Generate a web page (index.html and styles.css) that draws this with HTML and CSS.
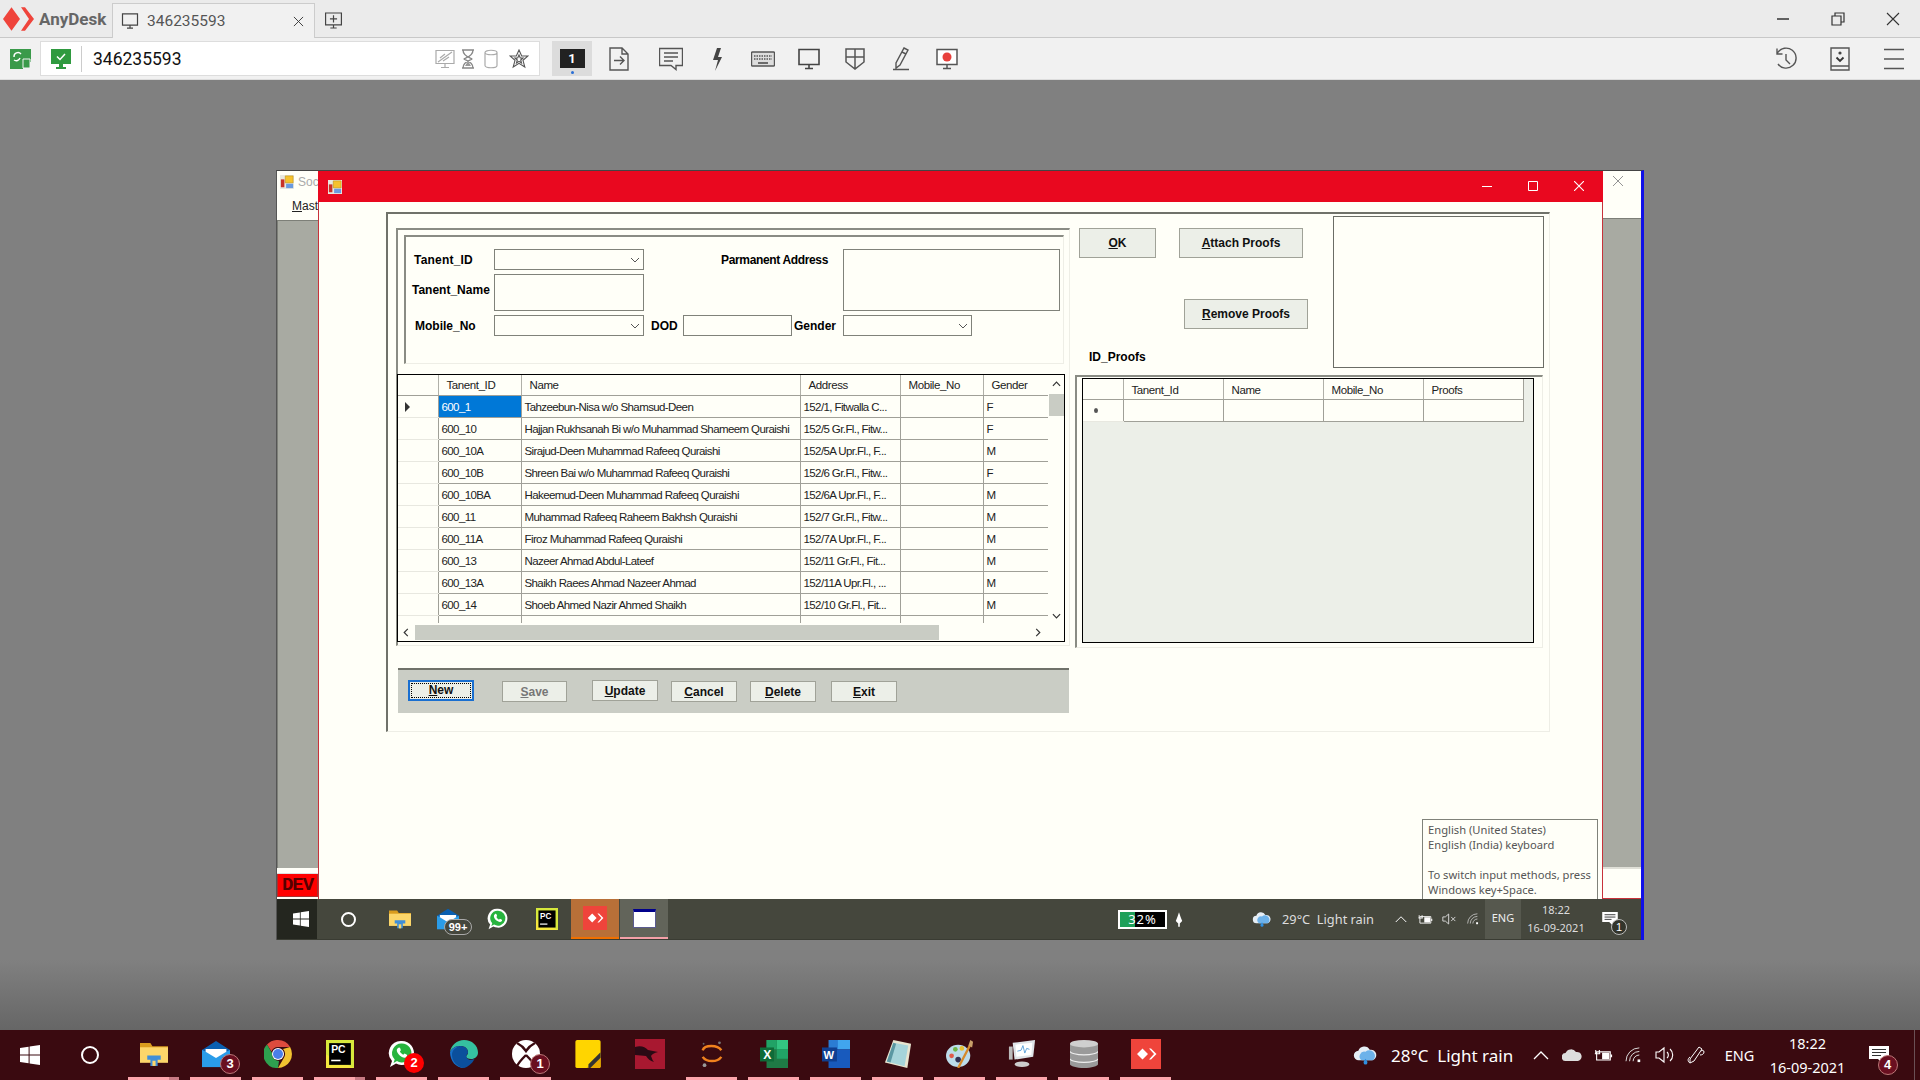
FILE: index.html
```html
<!DOCTYPE html>
<html lang="en">
<head>
<meta charset="UTF-8">
<title>AnyDesk - 346235593</title>
<link rel="stylesheet" href="styles.css">
</head>
<body>

<svg class="defs" xmlns="http://www.w3.org/2000/svg">
  <symbol id="ad-logo" viewBox="0 0 32 22" preserveAspectRatio="none"><path d="M0 11 8.500 1 17 11 8.500 21Z M18 1h4l9 10-9 10h-4l8-10Z"/></symbol>
  <symbol id="monitor" viewBox="0 0 24 24"><path d="M2 2.500h20v15H2Z M12 18v3 M8 21.500h8" fill="none" stroke="#444" stroke-width="1.600"/></symbol>
  <symbol id="win" viewBox="0 0 20 20"><path fill="#fff" d="M0 3 8.600 1.800V9.400H0Z M9.600 1.600 20 0V9.400H9.600Z M0 10.600H8.600V18.200L0 17Z M9.600 10.600H20V20L9.600 18.400Z"/></symbol>
  <symbol id="folder" viewBox="0 0 27 23"><path fill="#d99c1e" d="M0 1h10l2 3h15v6H0Z"/><path fill="#fcd66a" d="M0 5h27v15H0Z"/><path fill="#3f8ed8" d="M7 13h13v4h-3v6h-7v-6H7Z"/><path fill="#fcd66a" d="M12 18h3v5h-3Z"/></symbol>
  <symbol id="mail" viewBox="0 0 31 29"><path fill="#2a9ce9" d="M0 10h31v19H0Z"/><path fill="#0a5fb0" d="M15.500 0 31 10 15.500 17 0 10Z"/><path fill="#fff" d="M4 9h23v3l-11.500 7L4 12Z"/></symbol>
  <symbol id="whatsapp" viewBox="0 0 26 28"><path fill="#fff" d="M13 1a12 12 0 1 1-6 22.400L1 27l2-6A12 12 0 0 1 13 1Z"/><path fill="#27b43e" d="M13 3.500a9.500 9.500 0 1 1-5 17.600L4.500 23l1.200-3.500A9.500 9.500 0 0 1 13 3.500Z"/><path fill="#fff" d="M9 8c1-1 2-.5 2.300.5l.6 1.800-1 1.300c.7 1.400 1.800 2.500 3.300 3.200l1.300-1.200 2 .9c.8.500.9 1.200.4 2-1.200 1.500-3 1.500-5 .4-2.700-1.400-4.400-3.500-5-5.600C7.600 9.700 8 8.800 9 8Z"/></symbol>
  <symbol id="pycharm" viewBox="0 0 27 27"><path fill="#d7e83c" d="M0 0h27v27H0Z"/><path fill="#f5e73f" d="M0 14 27 27H0Z"/><path fill="#000" d="M3 3h21v21H3Z"/><text x="5" y="13" font-family="Liberation Sans" font-weight="700" font-size="10" fill="#fff">PC</text><path fill="#fff" d="M5 19h9v1.500H5Z"/></symbol>
  <symbol id="ad-tile" viewBox="0 0 30 30"><path fill="#ef443b" d="M0 0h30v30H0Z"/><path fill="#fff" d="M6 15 11.500 9.500 17 15 11.500 20.500Z M18 9.500h2l5.500 5.500-5.500 5.500h-2l5-5.500Z"/></symbol>
  <symbol id="cloud" viewBox="0 0 26 20"><path fill="#e6eef6" d="M6 15a5 5 0 0 1-.5-10A6.500 6.500 0 0 1 17.500 4 5.500 5.500 0 0 1 20 15Z"/><path fill="#6db2ea" d="M9 15a5 5 0 0 1 4-9 5 5 0 0 1 8 9Z"/><path fill="#2f8fe0" d="M13 13.500c1.500 2 2 3 2 4a2 2 0 0 1-4 0c0-1 .5-2 2-4Z"/></symbol>
  <symbol id="chev-up" viewBox="0 0 16 10"><path d="M1 9 8 2l7 7" fill="none" stroke="#fff" stroke-width="1.300"/></symbol>
  <symbol id="batt" viewBox="0 0 22 14"><path d="M4 3h15v9H4Z M3 1v4 M7 1v4 M2 5h6" fill="none" stroke="#fff" stroke-width="1.200"/><path fill="#fff" d="M10 4h8v7h-8Z M19.500 6H21v3h-1.500Z"/></symbol>
  <symbol id="wifi" viewBox="0 0 20 18"><path d="M1 16A15 15 0 0 1 16 1 M5 16A11 11 0 0 1 16 5 M9 16a7 7 0 0 1 7-7" fill="none" stroke="#ddd" stroke-width="1.100"/><path fill="#fff" d="M14 14h3v3h-3Z"/></symbol>
  <symbol id="app" viewBox="0 0 16 16"><path fill="#e8e8e0" d="M0 0h16v16H0Z"/><path fill="#f5c22e" stroke="#b98a10" stroke-width=".6" d="M6 1h9v8H6Z"/><path fill="#c83228" d="M1 5h4v9H1Z"/><path fill="#6a9ae0" d="M7 10h8v5H7Z"/></symbol>
  <symbol id="note" viewBox="0 0 20 18"><path fill="#fff" d="M0 0h20v13h-6v5l-5-5H0Z"/><path d="M3 3.500h14M3 6.500h14M3 9.500h9" stroke="#333" stroke-width="1.200"/></symbol>
  <symbol id="combo-arrow" viewBox="0 0 10 6"><path d="M1 1l4 4 4-4" fill="none" stroke="#555" stroke-width="1"/></symbol>
</svg>

<header class="tabbar">
  <div class="brand">
    <svg class="brand-logo"><use href="#ad-logo"/></svg>
    <span class="brand-name">AnyDesk</span>
  </div>
  <div class="tab">
    <svg class="tab-icon"><use href="#monitor"/></svg>
    <span class="tab-title">346235593</span>
    <svg class="tab-close" viewBox="0 0 12 12"><path d="M1 1l10 10M11 1 1 11" stroke="#333" stroke-width="1"/></svg>
  </div>
  <svg class="new-tab" viewBox="0 0 24 24"><path d="M2 2.500h20v15H2Z M12 18v3 M8 21.500h8 M12 5.500v9 M7.500 10h9" fill="none" stroke="#444" stroke-width="1.500"/></svg>
  <div class="win-ctrl">
    <svg viewBox="0 0 14 14"><path d="M1 7h12" stroke="#333" stroke-width="1.500"/></svg>
    <svg viewBox="0 0 14 14"><path d="M1 4h9v9H1Z M4 4V1h9v9h-3" fill="none" stroke="#333" stroke-width="1.200"/></svg>
    <svg viewBox="0 0 14 14"><path d="M1 1l12 12M13 1 1 13" stroke="#333" stroke-width="1.100"/></svg>
  </div>
</header>

<div class="toolbar">
  <svg class="conn-icon" viewBox="0 0 21 20"><path fill="#3a9a4a" d="M0 0h21v13h-8v7H0Z"/><path d="M4 8a4 4 0 0 1 7-3M10 9a4 4 0 0 1-6 2" fill="none" stroke="#fff" stroke-width="1.400"/><path fill="#3a9a4a" stroke="#f1f1f1" d="M13 10h7v9h-7Z"/></svg>
  <div class="addr">
    <svg class="addr-check" viewBox="0 0 20 20"><path fill="#2f9a3f" d="M0 0h20v15H0Z M8 15h4v3h3v2H5v-2h3Z"/><path d="M6 7.500 9 10.500 14 5" fill="none" stroke="#fff" stroke-width="1.500"/></svg>
    <span class="addr-text">346235593</span>
    <div class="addr-icons">
      <svg viewBox="0 0 20 20"><path d="M1 1.500h18v13H1Z M10 15v3 M6 18.500h8 M3 13 17 3 M5 9l5-4 M8 12l6-4" fill="none" stroke="#aaa" stroke-width="1.200"/></svg>
      <svg viewBox="0 0 20 20"><path d="M4 1h12M4 19h12M5 1c0 7 9 8 9 9s-9 2-9 9M15 1c0 7-9 8-9 9s9 2 9 9" fill="none" stroke="#888" stroke-width="1.300"/><path fill="#999" d="M7 17l3-5 3 5Z"/></svg>
      <svg viewBox="0 0 20 20"><path d="M4 3.500c0-3 12-3 12 0v13c0 3-12 3-12 0Z M4 3.500c0 3 12 3 12 0" fill="none" stroke="#aaa" stroke-width="1.200"/></svg>
      <svg viewBox="0 0 20 20"><path d="M10 1l2.700 6H19l-5 4.300 1.800 6.700L10 14.300 4.200 18 6 11.300 1 7h6.300Z M10 6l1.300 3H14l-2.300 2 .8 3L10 12.300 7.500 14l.8-3L6 9h2.700Z" fill="none" stroke="#555" stroke-width="1.100"/></svg>
    </div>
  </div>
  <div class="display-btn"><span class="display-num">1</span><i class="display-dot"></i></div>
  <div class="tools">
    <svg class="tool-first" viewBox="0 0 24 24"><path d="M3 1h12l6 6v16H3Z M15 1v6h6 M7 13.500h10 M13 9.500l4 4-4 4" fill="none" stroke="#555" stroke-width="1.400"/></svg>
    <svg viewBox="0 0 24 24"><path d="M.5 1.500h23v17H17v4l-5-4H.5Z M5 6h14M5 10h14M5 14h9" fill="none" stroke="#555" stroke-width="1.400"/></svg>
    <svg viewBox="0 0 24 24"><path fill="#444" d="M12 1h4l-3 9h4L10 24l3-11H8Z"/></svg>
    <svg viewBox="0 0 24 24"><rect x=".5" y="5" width="23" height="14" rx="1" fill="#ddd" stroke="#555" stroke-width="1.400"/><path d="M3 9h18M3 12h18" stroke="#555" stroke-width="1.500" stroke-dasharray="1.500 1"/><path d="M7 16h10" stroke="#444" stroke-width="1.500"/></svg>
    <svg><use href="#monitor"/></svg>
    <svg viewBox="0 0 24 24"><path d="M3 2h18v13l-9 7-9-7Z M12 2v20 M3 10h18" fill="none" stroke="#555" stroke-width="1.500"/></svg>
    <svg viewBox="0 0 24 24"><path d="M15 1l4 2-8 15-4 3 0-5Z M13 5l4 2 M4 22.500h16" fill="none" stroke="#555" stroke-width="1.400"/></svg>
    <svg viewBox="0 0 24 24"><path d="M2 2.500h20v15H2Z M12 18v3 M8 21.500h8" fill="#fff" stroke="#555" stroke-width="1.500"/><circle cx="12" cy="10" r="4.500" fill="#e8403c"/></svg>
  </div>
  <div class="tools-right">
    <svg viewBox="0 0 24 24"><path d="M3.500 6A10 10 0 1 1 4 17 M3 1.500V7h5.500 M12 7v6l4 4" fill="none" stroke="#555" stroke-width="1.400"/></svg>
    <svg viewBox="0 0 24 24"><path d="M3 1h18v22H3Z M3 19h18" fill="none" stroke="#555" stroke-width="1.400"/><circle cx="12" cy="6" r="1.600" fill="#444"/><path d="M8.500 10.500 12 14l3.500-3.500" fill="none" stroke="#333" stroke-width="1.800"/></svg>
    <svg viewBox="0 0 24 24"><path d="M2 2.500h20M2 12h20M2 21.500h20" stroke="#555" stroke-width="1.500"/></svg>
  </div>
</div>

<main class="desktop">
  <div class="remote">
    <div class="screen">

      <div class="mdi-left">
        <div class="mdi-title"><svg class="app-icon"><use href="#app"/></svg><span class="mdi-name">Soc</span></div>
        <div class="mdi-menu"><u>M</u>ast</div>
        <div class="mdi-work"></div>
        <div class="mdi-stripe"></div>
        <div class="dev-tag">DEV</div>
      </div>

      <section class="form">
        <div class="form-title">
          <svg class="app-icon"><use href="#app"/></svg>
          <div class="form-ctrl">
            <svg viewBox="0 0 10 10"><path d="M0 5.500h10" stroke="#fff" stroke-width="1"/></svg>
            <svg viewBox="0 0 10 10"><path d="M.5.500h9v9h-9Z" fill="none" stroke="#fff" stroke-width="1"/></svg>
            <svg viewBox="0 0 10 10"><path d="M0 0l10 10M10 0 0 10" stroke="#fff" stroke-width="1.100"/></svg>
          </div>
        </div>

        <div class="group-outer">
          <div class="left-col">
            <div class="group-mid">
              <div class="fields">
                <label class="lbl lbl-id">Tanent_ID</label>
                <div class="combo cell-b"><svg><use href="#combo-arrow"/></svg></div>
                <label class="lbl lbl-addr">Parmanent Address</label>
                <div class="box box-addr"></div>
                <label class="lbl lbl-name">Tanent_Name</label>
                <div class="box box-name"></div>
                <label class="lbl lbl-mob">Mobile_No</label>
                <div class="combo cell-b cell-r3"><svg><use href="#combo-arrow"/></svg></div>
                <label class="lbl lbl-dod">DOD</label>
                <div class="box box-dod"></div>
                <label class="lbl lbl-gen">Gender</label>
                <div class="combo combo-gen"><svg><use href="#combo-arrow"/></svg></div>
              </div>

              <div class="grid">
                <div class="grid-view">
                  <div class="grid-scroller">
                    <table class="dg">
                      <colgroup><col class="c-rh"><col class="c-id"><col class="c-nm"><col class="c-ad"><col class="c-mb"><col class="c-gn"></colgroup>
                      <tr><th></th><th>Tanent_ID</th><th>Name</th><th>Address</th><th>Mobile_No</th><th>Gender</th></tr>
                      <tr><td class="rh"><i class="row-arrow"></i></td><td class="sel">600_1</td><td>Tahzeebun-Nisa w/o Shamsud-Deen</td><td>152/1, Fitwalla C...</td><td></td><td>F</td></tr>
                      <tr><td class="rh"></td><td>600_10</td><td>Hajjan Rukhsanah Bi w/o Muhammad Shameem Quraishi</td><td>152/5 Gr.Fl., Fitw...</td><td></td><td>F</td></tr>
                      <tr><td class="rh"></td><td>600_10A</td><td>Sirajud-Deen Muhammad Rafeeq Quraishi</td><td>152/5A Upr.Fl., F...</td><td></td><td>M</td></tr>
                      <tr><td class="rh"></td><td>600_10B</td><td>Shreen Bai w/o Muhammad Rafeeq Quraishi</td><td>152/6 Gr.Fl., Fitw...</td><td></td><td>F</td></tr>
                      <tr><td class="rh"></td><td>600_10BA</td><td>Hakeemud-Deen Muhammad Rafeeq Quraishi</td><td>152/6A Upr.Fl., F...</td><td></td><td>M</td></tr>
                      <tr><td class="rh"></td><td>600_11</td><td>Muhammad Rafeeq Raheem Bakhsh Quraishi</td><td>152/7 Gr.Fl., Fitw...</td><td></td><td>M</td></tr>
                      <tr><td class="rh"></td><td>600_11A</td><td>Firoz Muhammad Rafeeq Quraishi</td><td>152/7A Upr.Fl., F...</td><td></td><td>M</td></tr>
                      <tr><td class="rh"></td><td>600_13</td><td>Nazeer Ahmad Abdul-Lateef</td><td>152/11 Gr.Fl., Fit...</td><td></td><td>M</td></tr>
                      <tr><td class="rh"></td><td>600_13A</td><td>Shaikh Raees Ahmad Nazeer Ahmad</td><td>152/11A Upr.Fl., ...</td><td></td><td>M</td></tr>
                      <tr><td class="rh"></td><td>600_14</td><td>Shoeb Ahmed Nazir Ahmed Shaikh</td><td>152/10 Gr.Fl., Fit...</td><td></td><td>M</td></tr>
                      <tr><td class="rh"></td><td>600_14A</td><td>Shaikh Raees Ahmad Nazeer Ahmad</td><td>152/10A Upr.Fl., ...</td><td></td><td>M</td></tr>
                    </table>
                  </div>
                  <div class="vscroll">
                    <svg class="sb-arrow" viewBox="0 0 10 6"><path d="M1 5l4-4 4 4" fill="none" stroke="#333" stroke-width="1.300"/></svg>
                    <div class="vthumb"></div>
                    <svg class="sb-arrow sb-down" viewBox="0 0 10 6"><path d="M1 1l4 4 4-4" fill="none" stroke="#333" stroke-width="1.300"/></svg>
                  </div>
                </div>
                <div class="hscroll">
                  <svg class="sb-arrow-h" viewBox="0 0 6 10"><path d="M5 1 1 5l4 4" fill="none" stroke="#333" stroke-width="1.300"/></svg>
                  <div class="hthumb"></div>
                  <svg class="sb-arrow-h sb-right" viewBox="0 0 6 10"><path d="M1 1l4 4-4 4" fill="none" stroke="#333" stroke-width="1.300"/></svg>
                </div>
              </div>
            </div>

            <div class="btn-panel">
              <button class="btn btn-new"><span class="focus-ring"><u>N</u>ew</span></button>
              <button class="btn btn-save"><u>S</u>ave</button>
              <button class="btn btn-update"><u>U</u>pdate</button>
              <button class="btn btn-cancel"><u>C</u>ancel</button>
              <button class="btn btn-delete"><u>D</u>elete</button>
              <button class="btn btn-exit"><u>E</u>xit</button>
            </div>
          </div>

          <div class="right-col">
            <div class="proof-top">
              <div class="proof-actions">
                <div class="action-row">
                  <button class="btn btn-ok"><u>O</u>K</button>
                  <button class="btn btn-attach"><u>A</u>ttach Proofs</button>
                </div>
                <button class="btn btn-remove"><u>R</u>emove Proofs</button>
                <label class="lbl lbl-proofs">ID_Proofs</label>
              </div>
              <div class="picture"></div>
            </div>
            <div class="group-proofs">
              <div class="grid-proofs">
                <table class="dg dg-proofs">
                  <colgroup><col class="p-rh"><col class="p-c"><col class="p-c"><col class="p-c"><col class="p-c"></colgroup>
                  <tr><th></th><th>Tanent_Id</th><th>Name</th><th>Mobile_No</th><th>Proofs</th></tr>
                  <tr><td class="rh"><i class="row-dot"></i></td><td></td><td></td><td></td><td></td></tr>
                </table>
              </div>
            </div>
          </div>
        </div>
      </section>

      <div class="mdi-right">
        <div class="mdi-right-title"><svg class="mdi-close" viewBox="0 0 10 10"><path d="M0 0l10 10M10 0 0 10" stroke="#888" stroke-width=".9"/></svg></div>
        <div class="mdi-work"></div>
        <div class="mdi-right-foot"></div>
      </div>

      <div class="ime-tip">English (United States)<br>English (India) keyboard<br><br>To switch input methods, press<br>Windows key+Space.</div>
    </div>

    <div class="remote-bar">
      <div class="r-start"><svg class="r-win"><use href="#win"/></svg></div>
      <div class="r-cortana"><i class="ring ring-sm"></i></div>
      <div class="r-slot"><svg class="r-ico"><use href="#folder"/></svg></div>
      <div class="r-slot r-mail"><svg class="r-ico"><use href="#mail"/></svg><span class="r-badge">99+</span></div>
      <div class="r-slot"><svg class="r-ico"><use href="#whatsapp"/></svg></div>
      <div class="r-slot"><svg class="r-ico"><use href="#pycharm"/></svg></div>
      <div class="r-tile r-tile-ad"><svg class="r-ad"><use href="#ad-tile"/></svg></div>
      <div class="r-tile r-tile-win"><div class="mini-win"></div></div>

      <div class="r-tray">
        <div class="r-batt"><span class="r-batt-text">32%</span></div>
        <div class="r-plug"><svg viewBox="0 0 10 18"><path fill="#fff" d="M5 0 7 6l2 5-3 3v4H4v-4L1 11l2-5Z"/></svg></div>
        <svg class="r-cloud"><use href="#cloud"/></svg>
        <span class="r-weather">29°C&nbsp; Light rain</span>
        <div class="r-cell"><svg class="t-up"><use href="#chev-up"/></svg></div>
        <div class="r-cell"><svg class="t-batt"><use href="#batt"/></svg></div>
        <div class="r-cell"><svg class="t-spk" viewBox="0 0 18 14"><path d="M1 4.500h3L8 1v12L4 9.500H1Z M11 4.500l5 5M16 4.500l-5 5" fill="none" stroke="#ddd" stroke-width="1.100"/></svg></div>
        <div class="r-cell"><svg class="t-wifi"><use href="#wifi"/></svg></div>
        <div class="r-eng">ENG</div>
        <div class="r-clock">18:22<br>16-09-2021</div>
        <div class="r-notif"><svg class="t-note"><use href="#note"/></svg><span class="r-notif-badge">1</span></div>
      </div>
    </div>
  </div>
</main>

<footer class="taskbar">
  <div class="t-start"><svg class="t-win"><use href="#win"/></svg></div>
  <div class="t-cortana"><i class="ring"></i></div>

  <div class="t-slot open split"><svg class="t-ico"><use href="#folder"/></svg></div>
  <div class="t-slot open"><svg class="t-ico"><use href="#mail"/></svg><span class="t-badge">3</span></div>
  <div class="t-slot open">
    <svg class="t-ico" viewBox="0 0 28 28"><path fill="#dd4b3e" d="M14 0a14 14 0 0 1 12.100 7H14a7 7 0 0 0-6.500 4.500L3 4.500A14 14 0 0 1 14 0Z"/><path fill="#f2c230" d="M26.100 7A14 14 0 0 1 14 28l5.500-9.500A7 7 0 0 0 19 9Z"/><path fill="#2ea04f" d="M3 4.500l5 8.500a7 7 0 0 0 7 8l-1 7A14 14 0 0 1 3 4.500Z"/><circle cx="14" cy="14" r="6" fill="#fff"/><circle cx="14" cy="14" r="5" fill="#4a7fe8"/></svg>
  </div>
  <div class="t-slot open split"><svg class="t-ico"><use href="#pycharm"/></svg></div>
  <div class="t-slot open"><svg class="t-ico"><use href="#whatsapp"/></svg><span class="t-badge t-badge-red">2</span></div>
  <div class="t-slot open">
    <svg class="t-ico" viewBox="0 0 28 28"><path fill="#35c1a0" d="M14 0c8 0 14 5.500 14 12.500 0 4-3 6.500-7 6.500-3 0-5-1-5-2.500 0-1 2-1.500 2-4C18 8 14 6 10 6 5 6 1.500 9 0 12 1 5 7 0 14 0Z"/><path fill="#1770c8" d="M0 12c1.500-3 5-6 10-6-4 2-6 5-6 9 0 6 5 12 12 13-1 0-1.500 0-2 0C6 28 0 21 0 12Z"/><path fill="#0b4f9c" d="M10 6c4 0 8 2 8 6.500 0 1-.8 1.800-1.500 2.500-.5 4 3 6 8 4-2.500 5-7 8-10.500 9-7-1-12-7-12-13 0-4 2-7 8-9Z"/></svg>
  </div>
  <div class="t-slot open">
    <svg class="t-ico" viewBox="0 0 28 28"><circle cx="14" cy="14" r="14" fill="#fff"/><path d="M5 3c4 2 7 5 9 8 2-3 5-6 9-8 M14 15c-3 3-7 7-9 11 M14 15c3 3 7 7 9 11" fill="none" stroke="#3a0a10" stroke-width="2.400"/></svg>
    <span class="t-badge">1</span>
  </div>
  <div class="t-slot">
    <svg class="t-ico" viewBox="0 0 27 30"><rect width="27" height="30" rx="2" fill="#ffd500"/><path fill="#e8a800" d="M27 13v15a2 2 0 0 1-2 2H12Z"/><path fill="#333" d="M27 13 14 26v4h2l11-11Z"/></svg>
  </div>
  <div class="t-slot">
    <svg class="t-ico t-ico-wide" viewBox="0 0 30 30"><path fill="#a81830" d="M0 0h30v30H0Z"/><path fill="#2a0a14" d="M0 8c6-2 10 0 13 3l10 2c-4 1-6 2-7 4 1 2 1 4 3 6-4-1-6-3-8-6-3 0-7-1-11-1Z"/></svg>
  </div>
  <div class="t-slot open">
    <svg class="t-ico" viewBox="0 0 28 30"><path d="M4 11C6 5 20 5 24 11M4 18c4 6 16 6 20 0" fill="none" stroke="#f0821e" stroke-width="2.600"/><circle cx="22" cy="3" r="1.500" fill="#777"/><circle cx="6" cy="27" r="2" fill="#999"/><circle cx="5" cy="4" r="1" fill="#666"/></svg>
  </div>
  <div class="t-slot open">
    <svg class="t-ico" viewBox="0 0 30 30"><path fill="#1f7a45" d="M7 0h23v30H7Z"/><path fill="#33c481" d="M18 0h12v10H18Z"/><path fill="#21a366" d="M7 0h11v10H7Z M18 10h12v10H18Z"/><path fill="#0f6b38" d="M0 8h15v15H0Z"/><text x="3.500" y="20" font-family="Liberation Sans" font-weight="700" font-size="13" fill="#fff">X</text></svg>
  </div>
  <div class="t-slot open">
    <svg class="t-ico" viewBox="0 0 30 30"><path fill="#2b7cd3" d="M7 0h23v10H7Z"/><path fill="#41a5ee" d="M17 0h13v10H17Z"/><path fill="#185abd" d="M7 10h23v20H7Z"/><path fill="#103f91" d="M0 8h16v15H0Z"/><text x="1.500" y="20" font-family="Liberation Sans" font-weight="700" font-size="12" fill="#fff">W</text></svg>
  </div>
  <div class="t-slot open">
    <svg class="t-ico" viewBox="0 0 28 30"><path fill="#e8e4d0" d="M9 0 28 4 24 30 0 24Z"/><path fill="#a6d4da" d="M9 3 25 6 21 28 2 23Z"/><path fill="#5a97a2" d="M2 23 9 3 12 4 6 24Z"/></svg>
  </div>
  <div class="t-slot open">
    <svg class="t-ico" viewBox="0 0 30 30"><ellipse cx="13" cy="17" rx="13" ry="12" fill="#bcdcea"/><circle cx="6" cy="17" r="2.500" fill="#e05a4a"/><circle cx="10" cy="10" r="2.500" fill="#6fb84a"/><circle cx="17" cy="9" r="2.500" fill="#e8c030"/><circle cx="13" cy="21" r="3" fill="#335"/><path d="M13 30 26 5" stroke="#d68a2a" stroke-width="2.500"/><path fill="#c9a06a" d="M24 6 26 0 29 2 28 8Z"/></svg>
  </div>
  <div class="t-slot open">
    <svg class="t-ico" viewBox="0 0 28 30"><path fill="#dfe4e8" d="M4 3 28 0 26 18 6 21Z"/><path fill="#fff" d="M7 5 25 3 24 16 8 18Z"/><path d="M9 12l4-1 2-5 2 8 2-5 3 1" fill="none" stroke="#5aa0d8" stroke-width="1"/><path fill="#bbb" d="M0 7h4v14H0Z"/><ellipse cx="14" cy="26" rx="8" ry="3" fill="#ccc"/></svg>
  </div>
  <div class="t-slot open">
    <svg class="t-ico" viewBox="0 0 30 30"><path fill="#9a9a9a" d="M0 4v22c0 2 7 4 15 4s15-2 15-4V4Z"/><ellipse cx="15" cy="4" rx="15" ry="4" fill="#cfcfcf"/><path d="M0 12c0 2 7 4 15 4s15-2 15-4M0 20c0 2 7 4 15 4s15-2 15-4" fill="none" stroke="#eee" stroke-width="1.300"/></svg>
  </div>
  <div class="t-slot open"><svg class="t-ico t-ico-wide"><use href="#ad-tile"/></svg></div>

  <div class="tray">
    <svg class="tray-cloud"><use href="#cloud"/></svg>
    <span class="tray-weather">28°C&nbsp; Light rain</span>
    <div class="tray-cells">
      <div class="tray-cell"><svg class="ti-up"><use href="#chev-up"/></svg></div>
      <div class="tray-cell"><svg class="ti-od" viewBox="0 0 20 12"><path fill="#ddd" d="M4 12a4 4 0 0 1-.5-8A6 6 0 0 1 14 3a4.500 4.500 0 0 1 2 9Z"/></svg></div>
      <div class="tray-cell"><svg class="ti-batt"><use href="#batt"/></svg></div>
      <div class="tray-cell"><svg class="ti-wifi"><use href="#wifi"/></svg></div>
      <div class="tray-cell"><svg class="ti-spk" viewBox="0 0 20 18"><path d="M1 6h3l5-4v14l-5-4H1Z M12 6a4 4 0 0 1 0 6 M15 3a8 8 0 0 1 0 12" fill="none" stroke="#fff" stroke-width="1.100"/></svg></div>
      <div class="tray-cell"><svg class="ti-pen" viewBox="0 0 20 18"><path d="M13 1l3 2-8 12-4 2 0-4Z M14 9c2 0 4-1 4-3s-2-2-3-1 M4 17C2 16 1 13 4 11" fill="none" stroke="#fff" stroke-width="1"/></svg></div>
    </div>
    <div class="tray-eng">ENG</div>
    <div class="tray-clock">18:22<br>16-09-2021</div>
    <div class="tray-notif"><svg class="tn-ico"><use href="#note"/></svg><span class="t-badge tn-badge">4</span></div>
    <div class="tray-edge"></div>
  </div>
</footer>

</body>
</html>
```

FILE: styles.css
```css
* {
    box-sizing: border-box;
}
html, body {
    margin: 0;
    width: 1920px;
    height: 1080px;
    overflow: hidden;
}
body {
    display: flex;
    flex-direction: column;
    font-family: "Liberation Sans", Arial, sans-serif;
}
svg {
    display: block;
    flex: none;
}
.defs {
    position: absolute;
    width: 0;
    height: 0;
}

/* anydesk chrome */
.tabbar {
    height: 38px;
    flex: none;
    display: flex;
    background: #ebebeb;
    border-bottom: 1px solid #c8c8c8;
}
.brand {
    width: 112px;
    height: 37px;
    display: flex;
    align-items: center;
    padding-left: 3px;
}
.brand-logo {
    width: 32px;
    height: 26px;
    fill: #ef443b;
}
.brand-name {
    margin-left: 4px;
    font-family: Roboto, sans-serif;
    font-weight: 700;
    font-size: 17px;
    color: #666;
}
.tab {
    width: 203px;
    height: 35px;
    margin-top: 3px;
    display: flex;
    align-items: center;
    padding-left: 8px;
    background: #f1f1f1;
    border: 1px solid #ccc;
    border-bottom: none;
}
.tab-icon {
    width: 18px;
    height: 18px;
}
.tab-title {
    margin-left: 8px;
    font-family: Roboto, sans-serif;
    font-size: 15.500px;
    color: #555;
}
.tab-close {
    width: 11px;
    height: 11px;
    margin-left: 68px;
}
.new-tab {
    width: 19px;
    height: 19px;
    margin: 11px 0 0 9px;
}
.win-ctrl {
    margin-left: auto;
    padding-right: 20px;
    display: flex;
    gap: 41px;
    align-items: center;
}
.win-ctrl svg {
    width: 14px;
    height: 14px;
}

.toolbar {
    height: 42px;
    flex: none;
    display: flex;
    align-items: center;
    padding-left: 10px;
    background: #f1f1f1;
    border-bottom: 1px solid #ddd;
}
.conn-icon {
    width: 21px;
    height: 20px;
}
.addr {
    width: 500px;
    height: 35px;
    margin-left: 9px;
    display: flex;
    align-items: center;
    padding-left: 10px;
    background: #fff;
    border: 1px solid #ddd;
}
.addr-check {
    width: 20px;
    height: 20px;
}
.addr-text {
    margin-left: 22px;
    font-family: Roboto, sans-serif;
    font-size: 17.500px;
    color: #111;
    position: relative;
}
.addr-text::before {
    content: "";
    position: absolute;
    left: -12px;
    top: -3px;
    bottom: -3px;
    width: 1px;
    background: #ccc;
}
.addr-icons {
    margin-left: auto;
    padding-right: 10px;
    display: flex;
    gap: 3px;
}
.addr-icons svg {
    width: 20px;
    height: 20px;
}
.addr-icons svg:last-child {
    margin-left: 5px;
}
.display-btn {
    width: 40px;
    height: 35px;
    margin-left: 12px;
    background: #dcdcdc;
    padding-top: 8px;
    display: flex;
    flex-direction: column;
    align-items: center;
}
.display-num {
    width: 25px;
    height: 19px;
    background: #222;
    color: #fff;
    font-family: Roboto, sans-serif;
    font-weight: 700;
    font-size: 13px;
    line-height: 19px;
    text-align: center;
}
.display-dot {
    width: 3px;
    height: 3px;
    margin-top: 3px;
    border-radius: 50%;
    background: #2a6fd6;
}
.tools {
    margin-left: 15px;
    display: flex;
    gap: 22px;
}
.tools svg {
    width: 24px;
    height: 24px;
}
.tool-first {
    margin-right: 6px;
}
.tools-right {
    margin-left: auto;
    padding-right: 14px;
    display: flex;
    gap: 30px;
}
.tools-right svg {
    width: 24px;
    height: 24px;
}

/* remote desktop */
.desktop {
    flex: 1;
    position: relative;
    background: linear-gradient(#808080 0, #808080 880px, #666 950px);
}
.remote {
    position: absolute;
    left: 276px;
    top: 90px;
    width: 1368px;
    height: 770px;
    display: flex;
    flex-direction: column;
    border-top: 1px solid #444;
    border-left: 1px solid #555;
    border-right: 3px solid #1010e8;
}
.screen {
    height: 728px;
    flex: none;
    display: flex;
    position: relative;
    background: #fffff8;
}
.mdi-left {
    width: 41px;
    display: flex;
    flex-direction: column;
}
.mdi-title {
    height: 27px;
    display: flex;
    align-items: flex-start;
    padding: 4px 0 0 3px;
    gap: 4px;
}
.app-icon {
    width: 14px;
    height: 14px;
}
.mdi-name {
    font-size: 12px;
    color: #aaa;
}
.mdi-menu {
    height: 22px;
    padding-left: 15px;
    font-size: 12px;
    line-height: 16px;
    color: #222;
    overflow: hidden;
    white-space: nowrap;
}
.mdi-work {
    flex: 1;
    background: #a8aaa2;
    border-top: 1px solid #7d7f78;
    border-left: 1px solid #7d7f78;
}
.mdi-stripe {
    height: 6px;
    border-bottom: 1px solid #ddd;
}
.dev-tag {
    height: 23px;
    margin-bottom: 2px;
    background: #f00;
    color: #500;
    border: 1px solid #a83030;
    border-top: none;
    font-family: "Liberation Mono", monospace;
    font-weight: 700;
    font-size: 19px;
    line-height: 22px;
    text-align: center;
    letter-spacing: -1px;
    overflow: hidden;
}

.form {
    width: 1285px;
    flex: none;
    background: #fffff8;
    border-left: 1px solid #c8323a;
    border-right: 1px solid #c8323a;
}
.form-title {
    height: 31px;
    display: flex;
    align-items: center;
    padding-left: 10px;
    margin: 0 -1px;
    background: #e9081f;
}
.form-ctrl {
    margin-left: auto;
    padding: 0 19px 2px 0;
    display: flex;
    gap: 36px;
}
.form-ctrl svg {
    width: 10px;
    height: 10px;
}
.group-outer {
    width: 1164px;
    height: 520px;
    margin: 10px 0 0 67px;
    display: flex;
    border-top: 2px solid #70726a;
    border-left: 2px solid #70726a;
    border-right: 1px solid #eeeee6;
    border-bottom: 1px solid #eeeee6;
}
.left-col {
    padding: 14px 0 0 8px;
}
.group-mid {
    width: 674px;
    height: 418px;
    padding-top: 5px;
    border-top: 2px solid #8a8c84;
    border-left: 2px solid #8a8c84;
    border-right: 1px solid #eeeee6;
    border-bottom: 1px solid #eeeee6;
}
.fields {
    width: 660px;
    height: 129px;
    margin-left: 6px;
    padding-top: 12px;
    display: grid;
    grid-template-columns: 88px 150px 39px 109px 51px 129px 88px;
    grid-template-rows: 21px 37px 21px;
    row-gap: 4px;
    align-items: center;
    border-top: 2px solid #8a8c84;
    border-left: 2px solid #8a8c84;
    border-right: 1px solid #eeeee6;
    border-bottom: 1px solid #eeeee6;
}
.lbl {
    font-weight: 700;
    font-size: 12px;
    color: #000;
    white-space: nowrap;
}
.lbl-id {
    padding-left: 8px;
    letter-spacing: .2px;
}
.lbl-name {
    grid-row: 2;
    grid-column: 1;
    padding: 0 0 5px 6px;
}
.lbl-mob {
    grid-row: 3;
    grid-column: 1;
    padding-left: 9px;
}
.lbl-addr {
    grid-row: 1;
    grid-column: 3 / 6;
    padding-right: 15px;
    text-align: right;
    letter-spacing: -.35px;
}
.lbl-dod {
    grid-row: 3;
    grid-column: 3;
    padding-left: 7px;
}
.lbl-gen {
    grid-row: 3;
    grid-column: 5;
    padding-left: 2px;
}
.box, .combo {
    height: 100%;
    background: #fffff8;
    border: 1px solid #80827a;
}
.combo {
    display: flex;
    align-items: center;
    justify-content: flex-end;
    padding-right: 3px;
}
.combo svg {
    width: 10px;
    height: 6px;
}
.cell-b {
    grid-column: 2;
}
.cell-r3 {
    grid-row: 3;
}
.box-addr {
    grid-column: 6 / 8;
    grid-row: 1 / 3;
}
.box-name {
    grid-column: 2;
    grid-row: 2;
}
.box-dod {
    grid-column: 4;
    grid-row: 3;
}
.combo-gen {
    grid-column: 6;
    grid-row: 3;
}

/* data grids */
.grid {
    width: 668px;
    height: 268px;
    margin: 10px 0 0 -1px;
    background: #fffff8;
    border: 1px solid #000;
}
.grid-view {
    height: 248px;
    display: flex;
}
.grid-scroller {
    width: 650px;
    overflow: hidden;
}
.dg {
    border-collapse: collapse;
    table-layout: fixed;
    width: 650px;
    font-size: 11.500px;
    letter-spacing: -.6px;
    color: #222;
}
.c-rh { width: 40px; }
.c-id { width: 83px; }
.c-nm { width: 279px; }
.c-ad { width: 100px; }
.c-mb { width: 83px; }
.c-gn { width: 65px; }
.dg th {
    height: 20px;
    padding: 1px 0 0 8px;
    font-weight: 400;
    letter-spacing: -.4px;
    text-align: left;
    border-right: 1px solid #b0b0a8;
    border-bottom: 1px solid #a0a098;
}
.dg th:last-child {
    border-right: none;
}
.dg td {
    height: 22px;
    padding: 1px 0 0 3px;
    white-space: nowrap;
    overflow: hidden;
    border-right: 1px solid #a0a098;
    border-bottom: 1px solid #a0a098;
}
.dg td:last-child {
    border-right: none;
}
.dg td.rh {
    border-bottom-color: #e8e8e0;
    border-right-color: #a0a098;
}
.dg td.sel {
    background: #0078d7;
    color: #fff;
}
.row-arrow {
    display: block;
    margin-left: 4px;
    width: 0;
    height: 0;
    border-left: 5px solid #333;
    border-top: 5px solid transparent;
    border-bottom: 5px solid transparent;
}
.row-dot {
    display: block;
    width: 4px;
    height: 5px;
    margin-left: 8px;
    border-radius: 50%;
    background: #555;
}
.vscroll {
    width: 16px;
    flex: none;
    display: flex;
    flex-direction: column;
    align-items: center;
}
.sb-arrow {
    width: 9px;
    height: 6px;
    margin-top: 6px;
}
.vthumb {
    width: 15px;
    height: 22px;
    margin-top: 7px;
    background: #c9ccc4;
}
.sb-down {
    margin-top: auto;
    margin-bottom: 4px;
}
.hscroll {
    height: 18px;
    display: flex;
    align-items: center;
    padding-left: 5px;
}
.sb-arrow-h {
    width: 6px;
    height: 9px;
}
.hthumb {
    width: 524px;
    height: 15px;
    margin-left: 6px;
    background: #c9ccc4;
}
.sb-right {
    margin-left: 96px;
}

.btn-panel {
    width: 671px;
    height: 45px;
    margin: 22px 0 0 2px;
    padding: 10px 0 0 10px;
    display: flex;
    align-items: flex-start;
    background: #cacdc5;
    border-top: 2px solid #70726a;
}
.btn {
    padding: 0;
    height: 21px;
    width: 66px;
    font-family: "Liberation Sans", Arial, sans-serif;
    font-weight: 700;
    font-size: 12px;
    color: #111;
    background: #ecefe8;
    border: 1px solid #a0a298;
}
.btn-new {
    padding: 1px;
    border: 2px solid #1a6fd0;
}
.focus-ring {
    display: block;
    height: 100%;
    line-height: 13px;
    border: 1px dotted #000;
}
.btn-save {
    width: 65px;
    margin: 1px 0 0 28px;
    color: #777;
}
.btn-update {
    margin-left: 25px;
}
.btn-cancel {
    margin: 1px 0 0 13px;
}
.btn-delete {
    margin: 1px 0 0 13px;
}
.btn-exit {
    margin: 1px 0 0 15px;
}

.right-col {
    margin-left: 5px;
    width: 469px;
}
.proof-top {
    height: 161px;
    display: flex;
}
.proof-actions {
    width: 258px;
    padding: 14px 0 0 4px;
}
.action-row {
    display: flex;
    gap: 23px;
}
.btn-ok {
    width: 77px;
    height: 30px;
}
.btn-attach {
    width: 124px;
    height: 30px;
}
.btn-remove {
    display: block;
    width: 124px;
    height: 30px;
    margin: 41px 0 0 105px;
}
.lbl-proofs {
    display: block;
    margin: 21px 0 0 10px;
}
.picture {
    width: 211px;
    height: 152px;
    margin-top: 2px;
    border: 1px solid #6b6d66;
}
.group-proofs {
    width: 468px;
    height: 273px;
    padding: 1px 0 0 5px;
    border-top: 2px solid #8a8c84;
    border-left: 2px solid #8a8c84;
    border-right: 1px solid #eeeee6;
    border-bottom: 1px solid #eeeee6;
}
.grid-proofs {
    width: 452px;
    height: 265px;
    background: #ecefe8;
    border: 1px solid #000;
}
.dg-proofs {
    width: 440px;
    background: #fffff8;
}
.p-rh { width: 40px; }
.p-c { width: 100px; }
.dg-proofs th {
    padding-top: 2px;
}
.dg-proofs td:last-child, .dg-proofs th:last-child {
    border-right: 1px solid #a0a098;
}

.mdi-right {
    flex: 1;
    display: flex;
    flex-direction: column;
}
.mdi-right-title {
    height: 47px;
    position: relative;
}
.mdi-close {
    position: absolute;
    left: 10px;
    top: 5px;
    width: 10px;
    height: 10px;
}
.mdi-right .mdi-work {
    border-left: none;
}
.mdi-right-foot {
    height: 32px;
    border-top: 2px solid #e0e0d8;
    border-bottom: 1px solid #c8323a;
}
.ime-tip {
    position: absolute;
    left: 1145px;
    bottom: 0;
    width: 176px;
    height: 80px;
    padding: 2px 5px;
    background: #fffff8;
    border: 1px solid #80827a;
    border-bottom: none;
    font-family: "Noto Sans", sans-serif;
    font-size: 11.200px;
    line-height: 15px;
    color: #555;
    white-space: nowrap;
}

/* remote taskbar */
.remote-bar {
    height: 41px;
    flex: none;
    display: flex;
    background: #45473d;
    border-bottom: 1px solid #3a3c33;
}
.r-start {
    width: 40px;
    display: flex;
    align-items: center;
    padding-left: 16px;
    background: #24261f;
}
.r-win {
    width: 16px;
    height: 16px;
}
.r-cortana {
    width: 58px;
    padding-left: 4px;
    display: flex;
    align-items: center;
    justify-content: center;
}
.ring {
    display: block;
    width: 18px;
    height: 18px;
    border: 2.500px solid #fff;
    border-radius: 50%;
}
.ring-sm {
    width: 15px;
    height: 15px;
    border-width: 2px;
}
.r-slot {
    width: 49px;
    position: relative;
    display: flex;
    align-items: center;
    justify-content: center;
}
.r-ico {
    width: 22px;
    height: 22px;
}
.r-mail .r-ico {
    margin-right: 2px;
}
.r-badge {
    position: absolute;
    left: 20px;
    top: 20px;
    width: 28px;
    height: 16px;
    border: 1px solid #aaa;
    border-radius: 8px;
    background: #45473d;
    color: #fff;
    font-size: 11px;
    font-weight: 700;
    line-height: 14px;
    text-align: center;
}
.r-tile {
    width: 48px;
    display: flex;
    align-items: center;
    justify-content: center;
    border-bottom: 2px solid;
}
.r-tile-ad {
    background: #b87038;
    border-color: #f07000;
    margin-right: 1px;
}
.r-ad {
    width: 24px;
    height: 24px;
}
.r-tile-win {
    background: #62645a;
    border-color: #f4a0a8;
}
.mini-win {
    width: 23px;
    height: 19px;
    background: #fff;
    border: 1px solid #5a5a90;
    border-top: 3px solid #00008b;
}
.r-tray {
    margin-left: auto;
    display: flex;
    align-items: center;
    height: 100%;
    padding-right: 12px;
    color: #ddd;
}
.r-batt {
    width: 49px;
    height: 19px;
    border: 2px solid #fff;
    background: linear-gradient(90deg, #1ea05a 0, #1ea05a 15px, #000 15px);
    color: #fff;
    font-family: "Noto Sans", sans-serif;
    font-size: 13px;
    line-height: 15px;
    text-align: center;
}
.r-batt-text {
    letter-spacing: 1px;
}
.r-plug {
    width: 24px;
    display: flex;
    justify-content: center;
    margin-right: 61px;
}
.r-plug svg {
    width: 8px;
    height: 15px;
}
.r-cloud {
    width: 20px;
    height: 15px;
    margin-right: 10px;
}
.r-weather {
    width: 94px;
    margin-right: 13px;
    font-family: "Noto Sans", sans-serif;
    font-size: 12.800px;
    white-space: nowrap;
}
.r-cell {
    width: 24px;
    display: flex;
    align-items: center;
    justify-content: center;
}
.t-up {
    width: 12px;
    height: 8px;
}
.t-batt {
    width: 16px;
    height: 11px;
}
.t-spk {
    width: 15px;
    height: 12px;
}
.t-wifi {
    width: 13px;
    height: 12px;
}
.r-eng {
    width: 36px;
    align-self: stretch;
    background: #56584e;
    font-family: "Noto Sans", sans-serif;
    font-size: 11px;
    line-height: 38px;
    text-align: center;
    color: #eee;
}
.r-clock {
    width: 70px;
    font-family: "Noto Sans", sans-serif;
    font-size: 11px;
    line-height: 18px;
    text-align: center;
}
.r-notif {
    width: 38px;
    height: 100%;
    position: relative;
    display: flex;
    align-items: center;
    justify-content: center;
}
.t-note {
    width: 16px;
    height: 14px;
}
.r-notif-badge {
    position: absolute;
    left: 20px;
    top: 20px;
    width: 16px;
    height: 16px;
    border: 1px solid #bbb;
    border-radius: 50%;
    background: #33352c;
    color: #fff;
    font-size: 11px;
    line-height: 14px;
    text-align: center;
}

/* windows taskbar */
.taskbar {
    height: 50px;
    flex: none;
    display: flex;
    background: #3a0a10;
    color: #fff;
}
.t-start {
    width: 60px;
    display: flex;
    align-items: center;
    justify-content: center;
}
.t-win {
    width: 20px;
    height: 20px;
}
.t-cortana {
    width: 60px;
    display: flex;
    align-items: center;
    justify-content: center;
}
.t-slot {
    width: 51px;
    margin-right: 11px;
    position: relative;
    display: flex;
    align-items: center;
    justify-content: center;
    border-bottom: 3px solid transparent;
}
.t-slot.open {
    border-bottom-color: #fca5ac;
}
.t-slot.split {
    border-image: linear-gradient(90deg, #fca5ac 80%, #c87a84 80%) 1;
}
.t-cortana + .t-slot {
    margin-left: 8px;
}
.t-ico {
    width: 28px;
    height: 28px;
}
.t-ico-wide {
    width: 30px;
    height: 30px;
}
.t-badge {
    position: absolute;
    left: 30px;
    top: 24px;
    width: 20px;
    height: 20px;
    border: 1px solid #b77;
    border-radius: 50%;
    background: #6a0f20;
    color: #fff;
    font-size: 13px;
    font-weight: 700;
    line-height: 18px;
    text-align: center;
}
.t-badge-red {
    left: 28px;
    top: 23px;
    border: none;
    line-height: 20px;
    background: #f00;
}
.tray {
    position: absolute;
    right: 0;
    bottom: 0;
    height: 50px;
    display: flex;
    align-items: center;
}
.tray-cloud {
    width: 25px;
    height: 19px;
}
.tray-weather {
    width: 122px;
    margin-left: 13px;
    margin-right: 12.500px;
    font-family: "Noto Sans", sans-serif;
    font-size: 17px;
    white-space: nowrap;
}
.tray-cells {
    display: flex;
}
.tray-cell {
    width: 31px;
    display: flex;
    align-items: center;
    justify-content: center;
}
.ti-up {
    width: 16px;
    height: 10px;
}
.ti-od {
    width: 20px;
    height: 12px;
}
.ti-batt {
    width: 20px;
    height: 13px;
}
.ti-wifi {
    width: 18px;
    height: 16px;
}
.ti-spk {
    width: 20px;
    height: 18px;
}
.ti-pen {
    width: 20px;
    height: 18px;
}
.tray-eng {
    width: 56px;
    font-family: "Noto Sans", sans-serif;
    font-size: 14.500px;
    text-align: center;
}
.tray-clock {
    width: 80px;
    font-family: "Noto Sans", sans-serif;
    font-size: 14.500px;
    line-height: 24px;
    text-align: center;
    white-space: nowrap;
}
.tray-notif {
    width: 62px;
    height: 50px;
    margin-right: 4.500px;
    position: relative;
    display: flex;
    align-items: center;
    justify-content: center;
}
.tn-ico {
    width: 20px;
    height: 18px;
}
.tn-badge {
    left: 30px;
    top: 25px;
}
.tray-edge {
    width: 4px;
    height: 100%;
    margin-right: 2px;
    border-left: 1px solid #6a5055;
}
```
